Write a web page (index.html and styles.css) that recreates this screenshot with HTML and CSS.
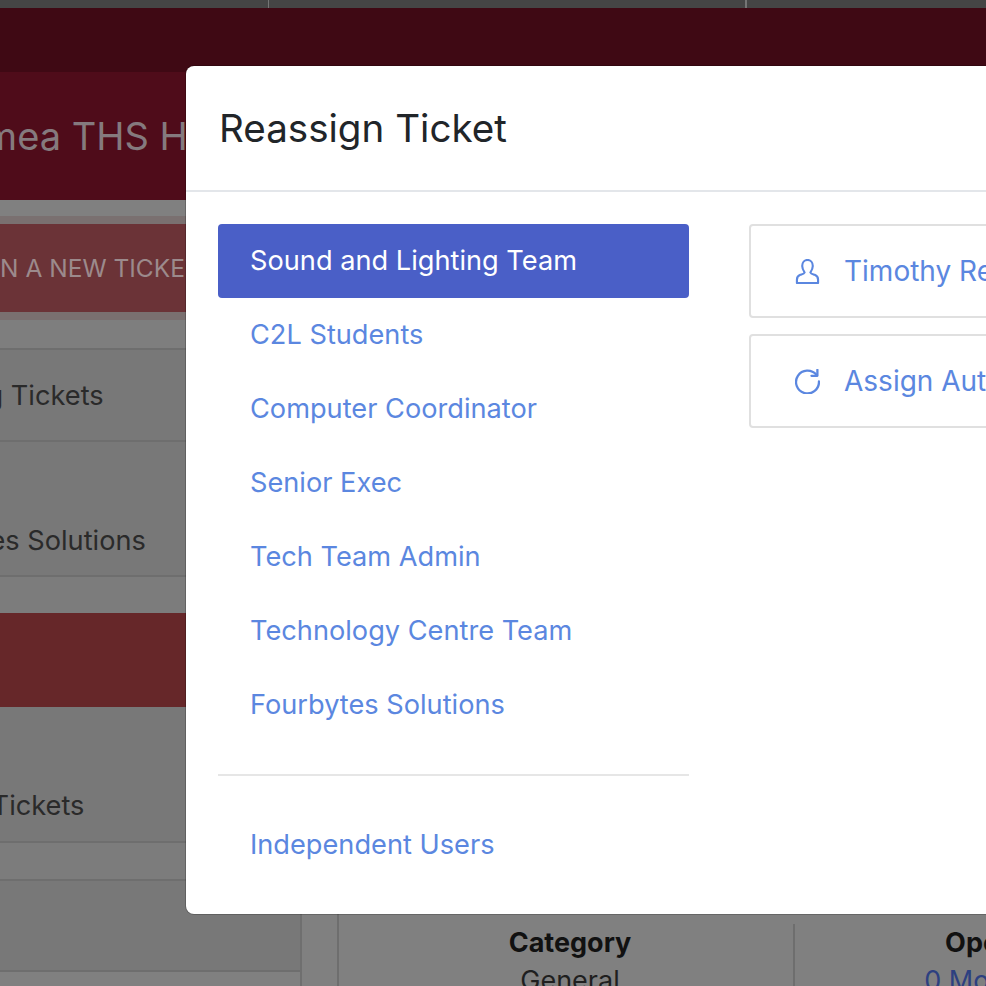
FILE: index.html
```html
<!DOCTYPE html>
<html lang="en">
<head>
  <meta charset="UTF-8">
  <meta name="viewport" content="width=device-width, initial-scale=1.0">
  <title>Reassign Ticket</title>
  <link rel="stylesheet" href="styles.css">
</head>
<body>
  <div class="page">
    <div class="top-strip">
      <div class="strip-cell strip-a"></div>
      <div class="strip-cell strip-b"></div>
      <div class="strip-cell"></div>
    </div>
    <div class="nav-band"></div>
    <header class="site-header">
      <h1>Kamea THS Helpdesk</h1>
    </header>
    <div class="columns">
      <aside class="sidebar">
        <div class="new-ticket-wrap">
          <div class="new-ticket">OPEN A NEW TICKET</div>
        </div>
        <div class="side-row side-gap"></div>
        <div class="side-row side-one"><span class="text-a">Outstanding Tickets</span></div>
        <div class="side-row side-two"><span class="text-b">Fourbytes Solutions</span></div>
        <div class="side-space"></div>
        <div class="side-red"></div>
        <div class="side-row side-three"><span class="text-c">My Tickets</span></div>
        <div class="side-row side-gap2"></div>
        <div class="side-row side-four"></div>
      </aside>
      <main class="content">
        <div class="info-table">
          <div class="info-cell cell-wide">
            <strong>Category</strong>
            <span>General</span>
          </div>
          <div class="info-cell cell-next">
            <strong>Opened</strong>
            <a href="#">0 Months ago</a>
          </div>
        </div>
      </main>
    </div>
  </div>

  <div class="modal">
    <div class="modal-header">
      <h2>Reassign Ticket</h2>
    </div>
    <div class="modal-body">
      <div class="team-col">
        <ul class="team-list">
          <li class="team active">Sound and Lighting Team</li>
          <li class="team">C2L Students</li>
          <li class="team">Computer Coordinator</li>
          <li class="team">Senior Exec</li>
          <li class="team">Tech Team Admin</li>
          <li class="team">Technology Centre Team</li>
          <li class="team">Fourbytes Solutions</li>
        </ul>
        <hr class="team-divider">
        <ul class="team-list">
          <li class="team">Independent Users</li>
        </ul>
      </div>
      <div class="user-col">
        <div class="user-btn">
          <svg class="icon" viewBox="0 0 24 26" fill="none" stroke="currentColor" stroke-width="2.200" stroke-linejoin="round">
            <path d="M12 1C8.800 1 6.500 3.600 6.500 7.200C6.500 10 7.700 12 9 14C8.500 15.500 6.500 15.800 4.500 16.500C2.300 17.300 1 19 1 21.500V25H23V21.500C23 19 21.700 17.300 19.500 16.500C17.500 15.800 15.500 15.500 15 14C16.300 12 17.500 10 17.500 7.200C17.500 3.600 15.200 1 12 1Z"/>
          </svg>
          <span>Timothy Reid</span>
        </div>
        <div class="user-btn">
          <svg class="icon" viewBox="0 0 24 24" fill="none" stroke="currentColor" stroke-width="2.200" stroke-linecap="round" stroke-linejoin="round">
            <path d="M20.500 5.500A11 11 0 1 0 23 12"/>
            <path d="M21.500 0.800V6.500H15.800"/>
          </svg>
          <span>Assign Automatically</span>
        </div>
      </div>
    </div>
  </div>
</body>
</html>
```

FILE: styles.css
```css
html, body {
  margin: 0;
  padding: 0;
  height: 986px;
  overflow: hidden;
}
body {
  font-family: 'Inter', 'Open Sans', sans-serif;
  background: #808080;
  position: relative;
  color: #212529;
}

/* page behind the dialog, already dimmed */
.page {
  height: 986px;
  overflow: hidden;
}
.top-strip {
  display: flex;
  height: 8px;
  background: #454545;
}
.strip-cell {
  border-right: 1px solid #757575;
}
.strip-a {
  width: 268px;
}
.strip-b {
  width: 476px;
}
.nav-band {
  height: 64px;
  background: #3f0914;
}
.site-header {
  height: 128px;
  background: #4f0c1a;
  display: flex;
  align-items: center;
}
.site-header h1 {
  margin: 0 0 0 -63px;
  font-size: 38px;
  font-weight: 400;
  color: #857a7e;
  white-space: nowrap;
}
.columns {
  display: flex;
  height: 786px;
}
.sidebar {
  width: 300px;
  flex: none;
  border-right: 2px solid #6f6f6f;
  overflow: hidden;
  padding-top: 16px;
}
.new-ticket-wrap {
  background: #7a7070;
  padding: 8px 0;
}
.new-ticket {
  height: 88px;
  line-height: 88px;
  background: #6b3337;
  color: #9c8a8c;
  font-size: 24.500px;
  white-space: nowrap;
  text-indent: -49px;
}
.side-row {
  border-bottom: 2px solid #6e6e6e;
  box-sizing: border-box;
  background: #787878;
  color: #2a2a2a;
  font-size: 27.200px;
  white-space: nowrap;
  display: flex;
  align-items: center;
}
.side-gap {
  height: 30px;
  background: #7e7e7e;
}
.side-one {
  height: 92px;
}
.side-two {
  height: 135px;
  padding-top: 64px;
}
.text-a {
  margin-left: -153px;
}
.text-b {
  margin-left: -109px;
}
.text-c {
  margin-left: -56px;
}
.side-space {
  height: 36px;
  background: #7c7c7c;
}
.side-red {
  height: 94px;
  background: #662729;
}
.side-three {
  height: 136px;
  padding-top: 63px;
}
.side-gap2 {
  height: 38px;
  background: #7c7c7c;
}
.side-four {
  height: 91px;
}
.content {
  flex: 1;
  padding-left: 35px;
}
.info-table {
  display: flex;
  margin-top: 602px;
  height: 184px;
  border-left: 2px solid #6e6e6e;
  padding-top: 122px;
}
.info-cell {
  display: flex;
  flex-direction: column;
  align-items: center;
  flex: none;
  font-size: 27px;
  line-height: 38px;
  color: #1f1f1f;
}
.cell-wide {
  width: 456px;
  padding-left: 8px;
  box-sizing: border-box;
  border-right: 2px solid #6e6e6e;
}
.cell-next {
  width: 404px;
}
.info-cell strong {
  color: #111;
  white-space: nowrap;
}
.info-cell a {
  color: #2d4080;
  text-decoration: none;
  white-space: nowrap;
  margin-left: 30px;
}

/* dialog */
.modal {
  position: absolute;
  left: 186px;
  top: 66px;
  width: 1000px;
  height: 848px;
  background: #fff;
  border-radius: 8px;
  box-shadow: 0 0 0 1px rgba(0, 0, 0, 0.2);
}
.modal-header {
  height: 124px;
  padding-left: 33px;
  border-bottom: 2px solid #e3e6ea;
  display: flex;
  align-items: center;
}
.modal-header h2 {
  margin: 0;
  font-size: 38.600px;
  font-weight: 400;
  color: #212529;
}
.modal-body {
  display: flex;
  padding: 32px;
  gap: 60px;
}
.team-col {
  width: 471px;
  flex: none;
}
.team-list {
  list-style: none;
  margin: 0;
  padding: 0;
}
.team {
  height: 74px;
  line-height: 73px;
  padding-left: 32px;
  font-size: 27.200px;
  color: #5b87e0;
  border-radius: 4px;
  white-space: nowrap;
}
.team.active {
  background: #4a5fc7;
  color: #fff;
}
.team-divider {
  border: 0;
  border-top: 2px solid #e6e6e6;
  margin: 32px 0;
}
.user-col {
  flex: 1;
  display: flex;
  flex-direction: column;
  gap: 16px;
}
.user-btn {
  height: 94px;
  box-sizing: border-box;
  border: 2px solid #e0e0e0;
  border-radius: 4px;
  display: flex;
  align-items: center;
  padding-left: 44px;
  font-size: 28px;
  color: #5b87e0;
  white-space: nowrap;
}
.icon {
  width: 25px;
  height: 25px;
  flex: none;
  margin-right: 24px;
}
```
